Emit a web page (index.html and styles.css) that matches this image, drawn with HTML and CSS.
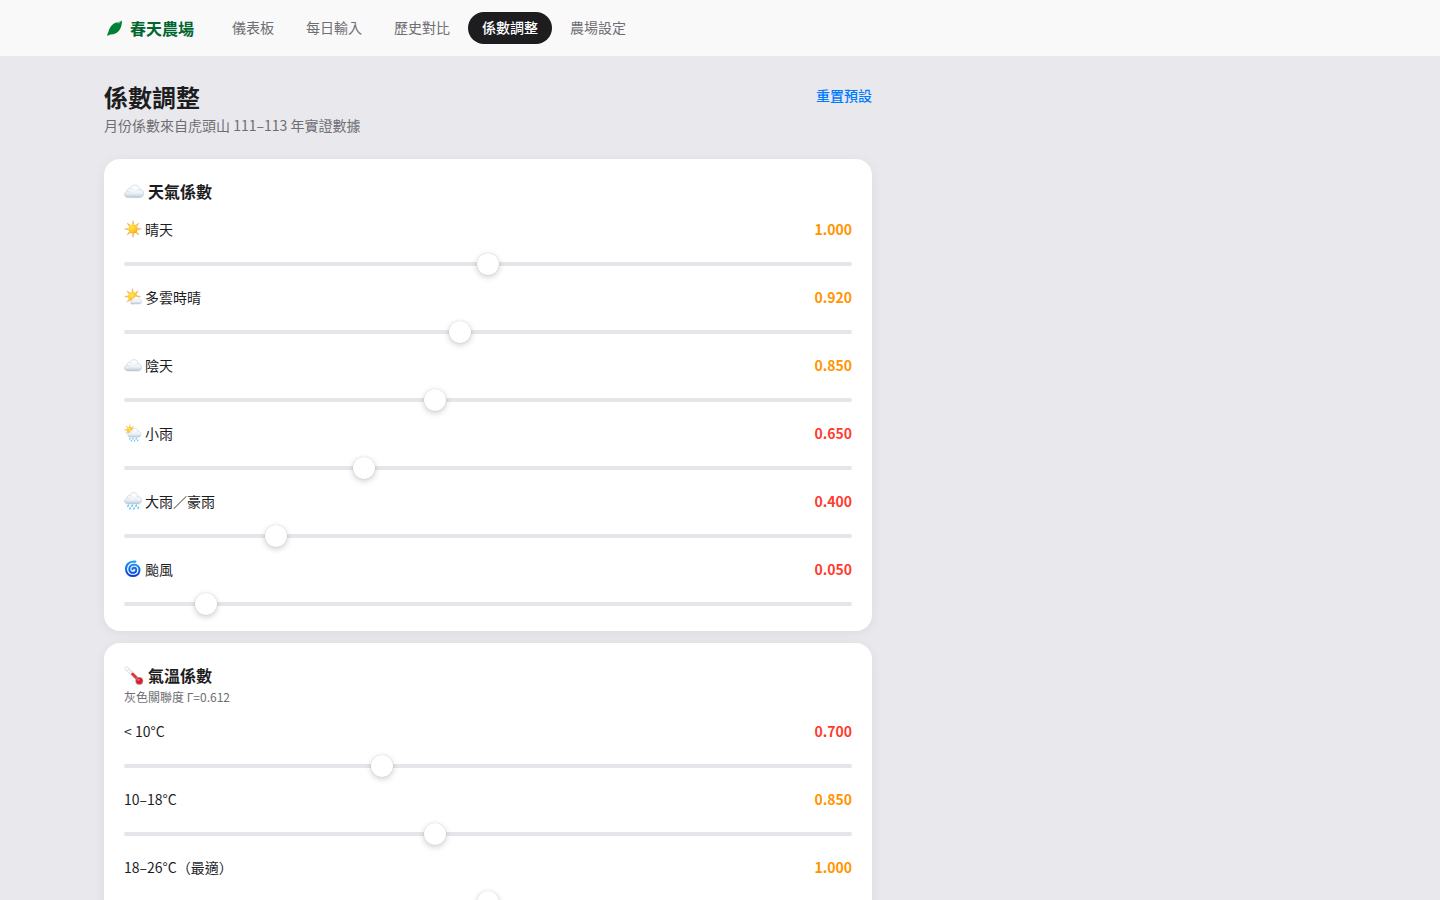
FILE: index.html
```html
<!DOCTYPE html>
<html lang="zh-TW">
<head>
  <meta charset="UTF-8">
  <meta name="viewport" content="width=device-width, initial-scale=1.0">
  <title>係數調整 - 春天農場</title>
  <link rel="stylesheet" href="styles.css">
</head>
<body>

  <!-- weather icons -->
  <svg class="sprite" width="0" height="0" aria-hidden="true">
    <defs>
      <linearGradient id="cloudFill" x1="0" y1="0" x2="0" y2="1">
        <stop offset="0.2" stop-color="#fdfeff"/>
        <stop offset="0.65" stop-color="#edf1f5"/>
        <stop offset="1" stop-color="#b9c8d5"/>
      </linearGradient>
      <radialGradient id="sunFill" cx="0.4" cy="0.35" r="0.7">
        <stop offset="0" stop-color="#ffe75a"/>
        <stop offset="0.6" stop-color="#ffc81f"/>
        <stop offset="1" stop-color="#f79a1d"/>
      </radialGradient>
      <linearGradient id="swirlFill" x1="0" y1="0" x2="0" y2="1">
        <stop offset="0" stop-color="#1c9cf2"/>
        <stop offset="1" stop-color="#1237d6"/>
      </linearGradient>
    </defs>

    <symbol id="cloud" viewBox="0 0 20 20">
      <path d="M4.6 16.600C2.1 16.600.6 15.300.6 13.400C.6 11.700 1.700 10.500 3.200 10.200C3.300 8.300 4.600 7.100 6.400 7.100C7.200 5.200 8.800 4.100 10.800 4.100C13.400 4.100 15.300 5.900 15.600 8.300C17.900 8.500 19.500 10.100 19.500 12.500C19.500 15 17.800 16.600 15.300 16.600Z" fill="url(#cloudFill)" stroke="#b8c6d2" stroke-width="0.600"/>
      <path d="M3.500 11C5 10.300 6.500 10.800 7.100 11.900M6.600 7.700C7.800 7.500 8.800 8 9.300 8.800M12.200 10.400C12.900 9 14.200 8.500 15.500 8.800" fill="none" stroke="#d3dde5" stroke-width="0.700"/>
    </symbol>

    <symbol id="sunDisc" viewBox="0 0 20 20">
      <path d="M10 .5L10.900 4.300H9.100ZM10 19.500L9.100 15.700H10.900ZM.5 10L4.300 9.100V10.900ZM19.500 10L15.700 10.900V9.100ZM3.300 3.300L6.600 5.400L5.400 6.600ZM16.700 3.300L14.600 6.600L13.400 5.400ZM3.300 16.700L5.400 13.400L6.600 14.600ZM16.700 16.700L13.400 14.600L14.600 13.400Z" fill="#f7b24a" stroke="#f0a95a" stroke-width="0.400" stroke-linejoin="round"/>
      <circle cx="10" cy="10" r="5.300" fill="url(#sunFill)"/>
    </symbol>

    <symbol id="sunCloud" viewBox="0 0 20 20">
      <use href="#sunDisc" x="0" y="0" width="19" height="19"/>
      <g transform="translate(6.500 6.600) scale(.68)"><use href="#cloud" width="20" height="20"/></g>
    </symbol>

    <symbol id="drops" viewBox="0 0 20 20">
      <path d="M4.800 14.600L4.200 16M9.300 14.600L8.700 16M13.800 14.600L13.200 16M7 17.600L6.500 18.900M11.400 17.600L10.900 18.900M16 17L15.500 18.300" fill="none" stroke="#55c4ee" stroke-width="1.500" stroke-linecap="round"/>
    </symbol>

    <symbol id="sunRain" viewBox="0 0 20 20">
      <use href="#sunDisc" x="0" y="0" width="13" height="13"/>
      <g transform="translate(3.600 1.600) scale(.79)"><use href="#cloud" width="20" height="20"/></g>
      <g transform="translate(3 4.400) scale(.78)"><use href="#drops" width="20" height="20"/></g>
    </symbol>

    <symbol id="rain" viewBox="0 0 20 20">
      <g transform="translate(0 -3.300)"><use href="#cloud" width="20" height="20"/></g>
      <use href="#drops" width="20" height="20"/>
    </symbol>

    <symbol id="cyclone" viewBox="0 0 20 20">
      <path d="M12.600 1.900C6.800 1 2.200 4.500 2.200 10C2.200 14.700 5.600 17.800 10 17.800C14.400 17.800 17.200 14.900 17.200 11.200C17.200 7.500 14.400 5.200 11.200 5.200C7.900 5.200 5.900 7.400 5.900 10.100C5.900 12.700 7.800 14.300 10 14.300C12.100 14.300 13.600 13 13.600 11.200C13.600 9.600 12.400 8.600 11.100 8.600C10 8.600 9.300 9.300 9.400 10.300" fill="none" stroke="#9bd2fb" stroke-width="2.600" stroke-linecap="round"/>
      <path d="M12.600 1.900C6.800 1 2.200 4.500 2.200 10C2.200 14.700 5.600 17.800 10 17.800C14.400 17.800 17.200 14.900 17.200 11.200C17.200 7.500 14.400 5.200 11.200 5.200C7.900 5.200 5.900 7.400 5.900 10.100C5.900 12.700 7.800 14.300 10 14.300C12.100 14.300 13.600 13 13.600 11.200C13.600 9.600 12.400 8.600 11.100 8.600C10 8.600 9.300 9.300 9.400 10.300" fill="none" stroke="url(#swirlFill)" stroke-width="2" stroke-linecap="round"/>
    </symbol>

    <symbol id="thermometer" viewBox="0 0 20 20">
      <path d="M2.600 3.400L13 13.600" stroke="#c3d6de" stroke-width="4" stroke-linecap="round"/>
      <path d="M2.600 3.400L13 13.600" stroke="#f6fafb" stroke-width="3" stroke-linecap="round"/>
      <path d="M5.200 4L3.700 5.500M7.200 6L5.700 7.500M9.200 8L7.700 9.500" stroke="#a9bbc4" stroke-width="0.600"/>
      <path d="M8.500 9L15 15.500" stroke="#e0323b" stroke-width="2.800" stroke-linecap="round"/>
      <circle cx="15.300" cy="15.900" r="3.700" fill="#d31f2b" stroke="#c4acb3" stroke-width="0.600"/>
      <circle cx="14.500" cy="14.800" r="1.100" fill="#f7777b"/>
    </symbol>
  </svg>

  <header class="topbar">
    <div class="topbar-inner">
      <a class="brand" href="#">
        <svg class="brand-icon" viewBox="0 0 20 20" aria-hidden="true">
          <path d="M3.200 18C3.300 16.300 4 15 4.500 13.600C5.300 9.800 7.700 6.600 10.900 5C13.200 3.900 15.700 4 18 2.800C18 6.200 17.300 9.800 15.200 12.500C13 15.200 9.700 16.700 6.300 16.500C5.200 16.900 4.200 17.500 3.200 18Z"/>
          <path class="brand-vein" d="M12.200 4.300C13.600 4.900 14.900 4.900 16.200 4.400"/>
        </svg>
        <span>春天農場</span>
      </a>
      <nav class="nav">
        <a href="#">儀表板</a>
        <a href="#">每日輸入</a>
        <a href="#">歷史對比</a>
        <a href="#" class="active">係數調整</a>
        <a href="#">農場設定</a>
      </nav>
    </div>
  </header>

  <div class="container">
    <main class="main">
      <div class="page-head">
        <div>
          <h1>係數調整</h1>
          <p>月份係數來自虎頭山 111–113 年實證數據</p>
        </div>
        <button type="button" class="reset">重置預設</button>
      </div>

      <section class="card">
        <h2><svg class="icon-lg" aria-hidden="true"><use href="#cloud"/></svg>天氣係數</h2>
        <div class="rows">
          <div class="row">
            <div class="row-head">
              <label for="sunny"><svg class="icon" aria-hidden="true"><use href="#sunDisc"/></svg>晴天</label>
              <output for="sunny" class="mid">1.000</output>
            </div>
            <input type="range" id="sunny" min="0" max="2" step="0.005" value="1">
          </div>
          <div class="row">
            <div class="row-head">
              <label for="partly"><svg class="icon" aria-hidden="true"><use href="#sunCloud"/></svg>多雲時晴</label>
              <output for="partly" class="mid">0.920</output>
            </div>
            <input type="range" id="partly" min="0" max="2" step="0.005" value="0.92">
          </div>
          <div class="row">
            <div class="row-head">
              <label for="cloudy"><svg class="icon" aria-hidden="true"><use href="#cloud"/></svg>陰天</label>
              <output for="cloudy" class="mid">0.850</output>
            </div>
            <input type="range" id="cloudy" min="0" max="2" step="0.005" value="0.85">
          </div>
          <div class="row">
            <div class="row-head">
              <label for="lightRain"><svg class="icon" aria-hidden="true"><use href="#sunRain"/></svg>小雨</label>
              <output for="lightRain" class="low">0.650</output>
            </div>
            <input type="range" id="lightRain" min="0" max="2" step="0.005" value="0.65">
          </div>
          <div class="row">
            <div class="row-head">
              <label for="heavyRain"><svg class="icon" aria-hidden="true"><use href="#rain"/></svg>大雨／豪雨</label>
              <output for="heavyRain" class="low">0.400</output>
            </div>
            <input type="range" id="heavyRain" min="0" max="2" step="0.005" value="0.4">
          </div>
          <div class="row">
            <div class="row-head">
              <label for="typhoon"><svg class="icon" aria-hidden="true"><use href="#cyclone"/></svg>颱風</label>
              <output for="typhoon" class="low">0.050</output>
            </div>
            <input type="range" id="typhoon" min="0" max="0.5" step="0.005" value="0.05">
          </div>
        </div>
      </section>

      <section class="card">
        <h2><svg class="icon-lg" aria-hidden="true"><use href="#thermometer"/></svg>氣溫係數</h2>
        <p class="note">灰色關聯度 Γ=0.612</p>
        <div class="rows">
          <div class="row">
            <div class="row-head">
              <label for="temp1">&lt; 10°C</label>
              <output for="temp1" class="low">0.700</output>
            </div>
            <input type="range" id="temp1" min="0" max="2" step="0.005" value="0.7">
          </div>
          <div class="row">
            <div class="row-head">
              <label for="temp2">10–18°C</label>
              <output for="temp2" class="mid">0.850</output>
            </div>
            <input type="range" id="temp2" min="0" max="2" step="0.005" value="0.85">
          </div>
          <div class="row">
            <div class="row-head">
              <label for="temp3">18–26°C（最適）</label>
              <output for="temp3" class="mid">1.000</output>
            </div>
            <input type="range" id="temp3" min="0" max="2" step="0.005" value="1">
          </div>
        </div>
      </section>
    </main>
  </div>

  <script>
    const sliders = document.querySelectorAll("input[type=range]");

    function show(slider) {
      const out = slider.parentElement.querySelector("output");
      const value = Number(slider.value);
      out.textContent = value.toFixed(3);
      out.className = value >= 0.8 ? "mid" : "low";
    }

    sliders.forEach((slider) => {
      slider.oninput = () => show(slider);
    });

    document.querySelector(".reset").onclick = () => {
      sliders.forEach((slider) => {
        slider.value = slider.defaultValue;
        show(slider);
      });
    };
  </script>
</body>
</html>
```

FILE: styles.css
```css
* {
  box-sizing: border-box;
}

body {
  margin: 0;
  font-family: "Noto Sans CJK TC", sans-serif;
  font-size: 14px;
  color: #1d1d1f;
  background: #e8e8ed;
}

h1, h2, p {
  margin: 0;
}

.sprite {
  position: absolute;
}

/* top bar */
.topbar {
  background: #f9f9f9;
}

.topbar-inner {
  display: flex;
  align-items: center;
  gap: 24px;
  max-width: 1280px;
  height: 56px;
  margin: 0 auto;
  padding: 0 24px;
}

.brand {
  display: flex;
  align-items: center;
  gap: 6px;
  font-size: 16px;
  font-weight: 700;
  color: #016630;
  text-decoration: none;
}

.brand-icon {
  width: 20px;
  height: 20px;
  fill: #008236;
}

.brand-vein {
  fill: none;
  stroke: #f9f9f9;
  stroke-width: 0.6;
}

.nav {
  display: flex;
  gap: 4px;
}

.nav a {
  padding: 0 14px 2px;
  line-height: 30px;
  border-radius: 16px;
  color: #6e6e73;
  text-decoration: none;
}

.nav a.active {
  background: #1d1d1f;
  color: #fff;
  font-weight: 500;
}

/* page */
.container {
  max-width: 1280px;
  margin: 0 auto;
  padding: 24px;
}

.main {
  max-width: 768px;
}

.page-head {
  display: flex;
  justify-content: space-between;
  align-items: flex-start;
  margin-bottom: 24px;
}

.page-head h1 {
  margin-bottom: 2px;
  font-size: 24px;
  line-height: 33px;
  font-weight: 700;
}

.page-head p {
  line-height: 20px;
  color: #6e6e73;
}

.reset {
  padding: 5px 0;
  border: none;
  background: none;
  font-family: inherit;
  font-size: 14px;
  font-weight: 500;
  line-height: 20px;
  color: #007aff;
  cursor: pointer;
}

.card {
  margin-bottom: 12px;
  padding: 20px 20px 16px;
  border-radius: 16px;
  background: #fff;
  box-shadow: 0 2px 12px rgba(0, 0, 0, 0.06);
}

.card h2 {
  display: flex;
  align-items: center;
  gap: 4px;
  font-size: 16px;
  line-height: 24px;
  font-weight: 700;
}

.note {
  padding-top: 2px;
  font-size: 12px;
  line-height: 16px;
  color: #6e6e73;
}

.icon-lg {
  width: 20px;
  height: 20px;
}

.icon {
  width: 18px;
  height: 18px;
}

/* slider rows */
.rows {
  display: flex;
  flex-direction: column;
  gap: 12px;
  margin-top: 16px;
}

.row-head {
  display: flex;
  justify-content: space-between;
  margin-bottom: 14px;
  line-height: 20px;
}

.row-head label {
  display: flex;
  align-items: center;
  gap: 3px;
}

.row-head output {
  font-weight: 700;
}

.mid {
  color: #ff9500;
}

.low {
  color: #ff3b30;
}

input[type=range] {
  -webkit-appearance: none;
  appearance: none;
  display: block;
  width: 100%;
  height: 22px;
  margin: 0;
  background: none;
  cursor: pointer;
}

input[type=range]::-webkit-slider-runnable-track {
  height: 4px;
  border-radius: 2px;
  background: #e5e5ea;
}

input[type=range]::-webkit-slider-thumb {
  -webkit-appearance: none;
  width: 22px;
  height: 22px;
  margin-top: -9px;
  border-radius: 50%;
  background: #fff;
  box-shadow: 0 2px 6px rgba(0, 0, 0, 0.2), 0 0 1px rgba(0, 0, 0, 0.2);
}
```
